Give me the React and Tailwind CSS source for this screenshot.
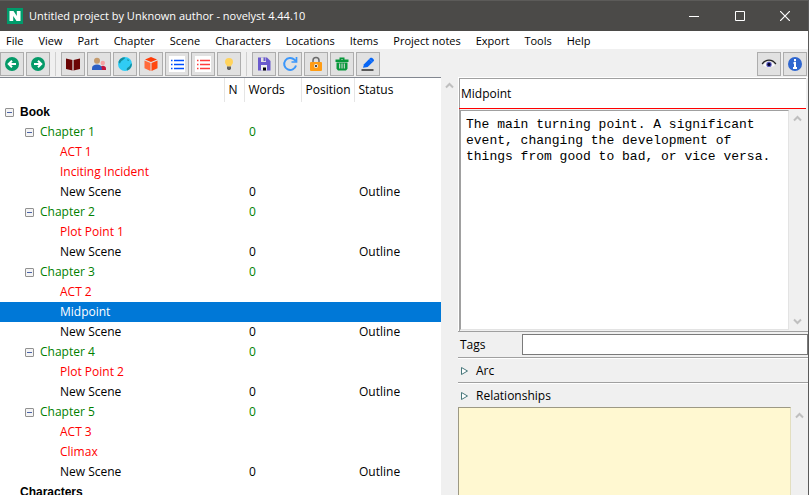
import React from "react";

const menus = [
  "File", "View", "Part", "Chapter", "Scene", "Characters", "Locations",
  "Items", "Project notes", "Export", "Tools", "Help",
];

const tree = [
  { label: "Book", level: 0, kind: "root", open: true },
  { label: "Chapter 1", level: 1, kind: "chapter", words: "0", open: true },
  { label: "ACT 1", level: 2, kind: "plot" },
  { label: "Inciting Incident", level: 2, kind: "plot" },
  { label: "New Scene", level: 2, kind: "scene", words: "0", status: "Outline" },
  { label: "Chapter 2", level: 1, kind: "chapter", words: "0", open: true },
  { label: "Plot Point 1", level: 2, kind: "plot" },
  { label: "New Scene", level: 2, kind: "scene", words: "0", status: "Outline" },
  { label: "Chapter 3", level: 1, kind: "chapter", words: "0", open: true },
  { label: "ACT 2", level: 2, kind: "plot" },
  { label: "Midpoint", level: 2, kind: "selected" },
  { label: "New Scene", level: 2, kind: "scene", words: "0", status: "Outline" },
  { label: "Chapter 4", level: 1, kind: "chapter", words: "0", open: true },
  { label: "Plot Point 2", level: 2, kind: "plot" },
  { label: "New Scene", level: 2, kind: "scene", words: "0", status: "Outline" },
  { label: "Chapter 5", level: 1, kind: "chapter", words: "0", open: true },
  { label: "ACT 3", level: 2, kind: "plot" },
  { label: "Climax", level: 2, kind: "plot" },
  { label: "New Scene", level: 2, kind: "scene", words: "0", status: "Outline" },
  { label: "Characters", level: 0, kind: "root" },
];

const rowStyle = {
  root: "font-['Liberation_Sans',sans-serif] font-bold text-black",
  chapter: "text-[#008000]",
  plot: "text-[#ff0000]",
  scene: "text-black",
  selected: "bg-[#0078d7] text-white",
};

const indent = { 0: "pl-5", 1: "pl-10", 2: "pl-[60px]" };

function Icon({ children }) {
  return (
    <svg viewBox="0 0 16 16" className="size-4" aria-hidden="true">
      {children}
    </svg>
  );
}

const ListIcon = ({ color }) => (
  <Icon>
    <rect width="16" height="16" fill="#fff" />
    <path d="M2 4.500h1.500M5 4.500h10M2 8.500h1.500M5 8.500h10M2 12.500h1.500M5 12.500h10" stroke={color} strokeWidth="1.300" />
  </Icon>
);

const navigation = [
  ["Back", <Icon>
    <circle cx="8" cy="8" r="7" fill="#049a68" />
    <path d="M12 8H5M8 4.7 4.7 8 8 11.3" fill="none" stroke="#fff" strokeWidth="2" />
  </Icon>],
  ["Forward", <Icon>
    <circle cx="8" cy="8" r="7" fill="#049a68" />
    <path d="M4 8h7M8 4.7 11.3 8 8 11.3" fill="none" stroke="#fff" strokeWidth="2" />
  </Icon>],
];

const views = [
  ["Book", <Icon>
    <path d="M1 2.500 7.500 4v10.500L1 13ZM15 2.500 8.500 4v10.500L15 13Z" fill="#6b0505" />
    <path d="M8 4v10.500" stroke="#b9a0a0" strokeWidth="1" />
  </Icon>],
  ["Characters", <Icon>
    <circle cx="6" cy="4.800" r="3" fill="#c49a6c" />
    <circle cx="11.800" cy="7" r="2.200" fill="#f7a3a3" />
    <path d="M9.500 14v-2c0-1.500 1-2.300 2.500-2.300s3 .9 3 2.500V14Z" fill="#c4143c" />
    <path d="M1 14v-1.800C1 9.800 3.200 8.500 6 8.500s4.800 1.500 4.800 3.700V14Z" fill="#2c5fc4" />
  </Icon>],
  ["Locations", <Icon>
    <circle cx="8" cy="8" r="7" fill="#30ccf4" />
    <path d="M1.500 6C2 3.500 4.500 1.500 7.500 1.200 8.500 2 7.500 3 6.500 3.500 5.500 5 4 4.500 3.500 6.500 3 8 1.800 7.500 1.500 6ZM14.800 7.500c.3 3-1.800 6-4.600 7-.9-.8-.6-2 .3-2.800 1-1 2-.8 2.500-2.200.3-1 .8-2 1.800-2ZM10 3.500c1-.3 2 .2 2.200 1-.8.500-2 .2-2.200-1Z" fill="#158c9c" />
  </Icon>],
  ["Items", <Icon>
    <path d="m8 1 6 2.500L8 6 2 3.500Z" fill="#ff3c08" />
    <path d="m1.500 4.500 6 2.500v8l-6-2.800Z" fill="#ff6a3c" />
    <path d="m14.500 4.500-6 2.500v8l6-2.800Z" fill="#ff4810" />
  </Icon>],
  ["Part list", <ListIcon color="#0050ff" />],
  ["Chapter list", <ListIcon color="#ff3c3c" />],
  ["Project notes", <Icon>
    <path d="M8 2a4 4 0 0 0-4 4c0 2.200 2 2.800 2 4.500h4C10 8.800 12 8.200 12 6a4 4 0 0 0-4-4Z" fill="#ffd35c" />
    <path d="M6 10.500h4v2.200L9 14H7l-1-1.300Z" fill="#626262" />
  </Icon>],
];

const commands = [
  ["Save", <Icon>
    <path d="M2 1.500h9L14.500 5v9.500H2Z" fill="#6a5acd" />
    <path d="M5 1.500h5V6H5Z" fill="#e1e1e1" />
    <path d="M7.500 1.500h2v3.500h-2Z" fill="#6a5acd" />
    <path d="M5 9h6v5.500H5Z" fill="#eee" />
    <path d="M7 11.500h3v3H7Z" fill="#000" />
  </Icon>],
  ["Reload", <Icon>
    <path d="M14 9.500A6 6 0 1 1 12.500 3.800L14 5.300" fill="none" stroke="#3c97fa" strokeWidth="2" />
    <path d="M14.500 1v5H9.500" fill="none" stroke="#3c97fa" strokeWidth="1.700" />
  </Icon>],
  ["Lock", <Icon>
    <path d="M5 7V4.500C5 2.500 6.200 1.500 8 1.500s3 1 3 3V7" fill="none" stroke="#6b6b6b" strokeWidth="1.500" />
    <rect x="2" y="6" width="12" height="9" rx="1" fill="#ff9c14" />
    <circle cx="8" cy="10" r="2" fill="#eee" />
    <circle cx="8" cy="10" r="1.100" fill="#222" />
  </Icon>],
  ["Trash", <Icon>
    <path d="M1.500 3.500h13V6h-13ZM5.500 1.500h5V4H9V3H7v1H5.500ZM2.500 6.500h11v6.300l-1.500 1.700H4l-1.500-1.700Z" fill="#07973a" />
    <path d="M5.700 7.500v5M8 7.500v5M10.300 7.500v5" stroke="#e1e1e1" strokeWidth="1" />
  </Icon>],
  ["Manuscript", <Icon>
    <path d="m3 11.800 1-3.500L10.200 2c1.300-1.300 4.600 1.300 3.600 2.900L7.700 11Z" fill="#0866f5" />
    <path d="m9.200 3.100 3.400 2.900" stroke="#4b91ff" strokeWidth=".7" />
    <path d="M1.500 14h12" stroke="#111" strokeWidth="1.300" />
  </Icon>],
];

const panels = [
  ["Toggle viewer", <Icon>
    <path d="M2 9c3-4 9-4 12 0-3 3-9 3-12 0Z" fill="#fafafa" />
    <circle cx="8" cy="8.400" r="2.700" fill="#5a5ac0" />
    <circle cx="8" cy="8.400" r="1.600" fill="#05052e" />
    <path d="M1.200 8C4.500 2.800 11.500 2.800 14.800 8" fill="none" stroke="#222" strokeWidth="1.400" />
  </Icon>],
  ["Toggle properties", <Icon>
    <circle cx="8" cy="8" r="7" fill="#2f66cf" />
    <path d="M8 3v2.300M6.500 7H8v5M6 12h4" fill="none" stroke="#fff" strokeWidth="2" />
  </Icon>],
];

function ToolGroup({ items }) {
  return (
    <div className="flex gap-0.5">
      {items.map(([name, icon]) => (
        <button key={name} aria-label={name} className="flex size-6 items-center justify-center border border-[#adadad] bg-[#e1e1e1]">
          {icon}
        </button>
      ))}
    </div>
  );
}

const Divider = () => <div className="mx-[5px] h-6 w-px bg-[#cfcfcf]" />;

function Chevron({ down = false, label }) {
  return (
    <button aria-label={label} className="flex h-[17px] w-full items-center justify-center">
      <svg width="9" height="7" viewBox="0 0 9 7" aria-hidden="true">
        <path d={down ? "M1 1.500 4.500 5 8 1.500" : "M1 5.500 4.500 2 8 5.500"} fill="none" stroke="#bfbfbf" strokeWidth="2" />
      </svg>
    </button>
  );
}

function Scrollbar({ name, end = false }) {
  return (
    <div className="flex w-[17px] shrink-0 flex-col justify-between bg-[#f0f0f0]">
      <Chevron label={`Scroll ${name} up`} />
      {end && <Chevron down label={`Scroll ${name} down`} />}
    </div>
  );
}

function TitleBar() {
  return (
    <header className="flex h-[31px] shrink-0 items-center border-t border-[#5c5b59] bg-[#4b4a48] pl-[7px] text-white">
      <svg width="16" height="16" viewBox="0 0 16 16" aria-hidden="true">
        <rect width="16" height="16" fill="#009b6b" />
        <path d="M2.500 13V3h4l3.300 5V3h3.700v10h-4L6.200 8v5Z" fill="#fff" />
      </svg>
      <h1 className="ml-1.5 flex-1 truncate text-[11px]">Untitled project by Unknown author - novelyst 4.44.10</h1>
      <button aria-label="Minimize" className="flex h-full w-[46px] items-center justify-center">
        <svg width="10" height="10" aria-hidden="true"><path d="M0 5.500h10" stroke="#fff" /></svg>
      </button>
      <button aria-label="Maximize" className="flex h-full w-[45px] items-center justify-center">
        <svg width="10" height="10" aria-hidden="true"><path d="M.5.5h9v9h-9Z" fill="none" stroke="#fff" /></svg>
      </button>
      <button aria-label="Close" className="flex h-full w-[46px] items-center justify-center">
        <svg width="10" height="10" aria-hidden="true"><path d="m0 0 10 10M10 0 0 10" stroke="#fff" strokeWidth="1.200" /></svg>
      </button>
    </header>
  );
}

function TreeTable() {
  return (
    <div className="min-w-0 flex-1 overflow-hidden border-t border-[#828790] bg-white">
      <table className="w-full table-fixed border-collapse text-left">
        <colgroup>
          <col className="w-[224px]" />
          <col className="w-5" />
          <col className="w-[57px]" />
          <col className="w-[53px]" />
          <col />
        </colgroup>
        <thead>
          <tr className="h-6">
            <th aria-label="Title" />
            {["N", "Words", "Position", "Status"].map((name) => (
              <th key={name} className="border-l border-[#e5e5e5] p-0 pl-1 font-normal">{name}</th>
            ))}
          </tr>
        </thead>
        <tbody>
          {tree.map((row, i) => (
            <tr key={i} className={`h-5 ${rowStyle[row.kind]}`}>
              <td className="p-0">
                <div className={`relative h-5 leading-5 ${indent[row.level]}`}>
                  {row.open && (
                    <button
                      aria-label={`Collapse ${row.label}`}
                      className={`absolute top-1.5 flex size-[9px] items-center justify-center rounded-[1px] border border-[#919191] bg-[#f4f4f4] ${row.level === 0 ? "left-[5px]" : "left-[25px]"}`}
                    >
                      <span className="h-px w-[5px] bg-[#4b63a7]" />
                    </button>
                  )}
                  {row.label}
                </div>
              </td>
              <td className="p-0" />
              <td className="p-0 pl-[5px] leading-5">{row.words}</td>
              <td className="p-0" />
              <td className="p-0 pl-[5px] leading-5">{row.status}</td>
            </tr>
          ))}
        </tbody>
      </table>
    </div>
  );
}

function Section({ name }) {
  return (
    <button className="flex h-[25px] shrink-0 items-center gap-2 border-t border-[#a0a0a0] pt-0.5 pl-[3px] shadow-[inset_0_1px_#fff]">
      <svg width="7" height="8" viewBox="0 0 7 8" aria-hidden="true">
        <path d="M.5.5v7L6.500 4Z" fill="#fff" stroke="#47777b" />
      </svg>
      {name}
    </button>
  );
}

function Properties() {
  return (
    <section className="flex min-w-0 flex-1 flex-col">
      <div className="flex h-[254px] shrink-0 flex-col border-t border-l border-white pr-0.5">
        <input
          aria-label="Title"
          defaultValue="Midpoint"
          className="h-[30px] shrink-0 border-t border-l border-[#a0a0a0] bg-white pl-px outline-none"
        />
        <div className="h-px shrink-0 bg-[#ff0000]" />
        <div className="flex flex-1 border-l border-[#a0a0a0] py-px">
          <textarea
            aria-label="Description"
            defaultValue="The main turning point. A significant event, changing the development of things from good to bad, or vice versa."
            className="min-w-0 flex-1 resize-none overflow-hidden border border-[#e3e3e3] border-t-[#a0a0a0] border-l-[#a0a0a0] bg-white px-[5px] pt-1.5 font-['Liberation_Mono',monospace] text-[13px] leading-4 outline-none"
          />
          <Scrollbar name="description" end />
        </div>
      </div>
      <div className="flex h-[26px] shrink-0 items-center border-t border-[#a0a0a0] pl-0.5">
        <label htmlFor="tags" className="w-[62px]">Tags</label>
        <input id="tags" className="h-[21px] min-w-0 flex-1 border border-[#7a7a7a] bg-white px-1 outline-none" />
      </div>
      <Section name="Arc" />
      <Section name="Relationships" />
      <div className="flex min-h-0 flex-1">
        <textarea
          aria-label="Notes"
          className="min-w-0 flex-1 resize-none border-t border-r border-l border-[#9d9984] border-r-[#e3dfc0] bg-[#fff8d1] px-1 outline-none"
        />
        <Scrollbar name="notes" />
      </div>
    </section>
  );
}

export default function App() {
  return (
    <div className="flex h-screen flex-col overflow-hidden border-r border-[#5a5a5a] bg-[#f0f0f0] font-['Open_Sans',sans-serif] text-[12px] text-black">
      <TitleBar />
      <nav className="flex h-[18px] shrink-0 gap-[3px] bg-white text-[11px]">
        {menus.map((name) => (
          <button key={name} className="px-1.5 leading-5 whitespace-nowrap">{name}</button>
        ))}
      </nav>
      <div className="flex h-7 shrink-0 items-center pt-px pr-px">
        <ToolGroup items={navigation} />
        <Divider />
        <ToolGroup items={views} />
        <Divider />
        <ToolGroup items={commands} />
        <div className="ml-auto">
          <ToolGroup items={panels} />
        </div>
      </div>
      <main className="flex min-h-0 flex-1">
        <div className="flex w-[458px] shrink-0">
          <TreeTable />
          <Scrollbar name="tree" />
        </div>
        <Properties />
      </main>
    </div>
  );
}
